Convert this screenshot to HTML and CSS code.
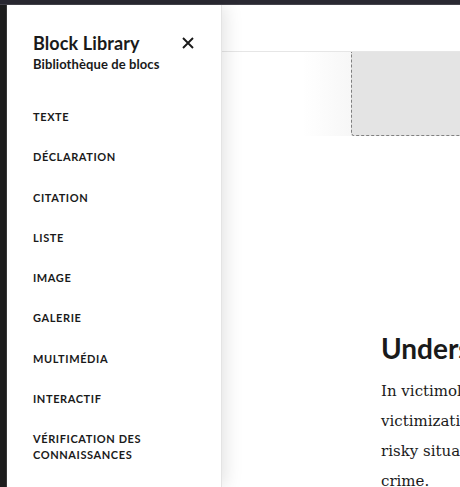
FILE: index.html
```html
<!DOCTYPE html>
<html lang="fr">
<head>
<meta charset="utf-8">
<title>Block Library</title>
<link rel="stylesheet" href="styles.css">
</head>
<body>
<div class="topbar"></div>
<div class="app">
  <div class="rail"></div>
  <aside class="panel">
    <div class="panel-head">
      <div class="titles">
        <h1 class="title">Block Library</h1>
        <p class="subtitle">Bibliothèque de blocs</p>
      </div>
      <button class="close" aria-label="Fermer">
        <svg width="12" height="12" viewBox="0 0 12 12"><path d="M1 1L11 11M11 1L1 11" stroke="#1a1a1a" stroke-width="1.9" fill="none"/></svg>
      </button>
    </div>
    <ul class="blocks">
      <li>TEXTE</li>
      <li>DÉCLARATION</li>
      <li>CITATION</li>
      <li>LISTE</li>
      <li>IMAGE</li>
      <li>GALERIE</li>
      <li>MULTIMÉDIA</li>
      <li>INTERACTIF</li>
      <li>VÉRIFICATION DES CONNAISSANCES</li>
    </ul>
  </aside>
  <main class="main">
    <div class="toolbar"></div>
    <div class="canvas">
      <div class="placeholder"></div>
      <article class="article">
        <h2 class="heading">Understanding victimology</h2>
        <p class="body"><span class="line">In victimology, lifestyle theory explains</span><span class="line">victimization as a result of exposure to</span><span class="line">risky situations that create chances for</span><span class="line">crime.</span></p>
      </article>
    </div>
  </main>
</div>
</body>
</html>
```
FILE: styles.css
```css
* { box-sizing: border-box; }
html, body { margin: 0; padding: 0; }
body {
  width: 460px;
  height: 487px;
  overflow: hidden;
  background: #ffffff;
  font-family: "Lato", "Noto Sans", sans-serif;
  color: #1a1a1a;
}
.topbar {
  height: 5px;
  background: #2a2932;
  border-bottom: 1px solid #45444c;
}
.app {
  display: flex;
  height: 482px;
}
.rail {
  width: 7px;
  flex: none;
  background: #1e1e1e;
  border-right: 1px solid #3a3a3a;
}
.panel {
  width: 215px;
  flex: none;
  background: #fff;
  padding: 27px 27px 0 26px;
  position: relative;
  z-index: 2;
  box-shadow: 2px 0 18px rgba(0,0,0,0.13);
  border-right: 1px solid #e4e4e4;
}
.panel-head {
  display: flex;
  justify-content: space-between;
  align-items: flex-start;
}
.title {
  margin: 0;
  font-size: 18px;
  line-height: 22px;
  font-weight: 700;
  letter-spacing: 0.1px;
}
.subtitle {
  margin: 1px 0 0;
  font-size: 13px;
  line-height: 18px;
  font-weight: 700;
  letter-spacing: 0.1px;
}
.close {
  border: 0;
  background: none;
  padding: 0;
  margin-top: 5px;
  width: 12px;
  height: 12px;
  display: flex;
}
.blocks {
  list-style: none;
  margin: 36px 0 0;
  padding: 0;
}
.blocks li {
  font-size: 11px;
  line-height: 16px;
  font-weight: 700;
  letter-spacing: 0.6px;
  margin-bottom: 24.25px;
}
.main {
  flex: 1;
  min-width: 0;
  display: flex;
  flex-direction: column;
}
.toolbar {
  height: 47px;
  flex: none;
  border-bottom: 1px solid #e6e6e6;
}
.canvas {
  flex: 1;
  overflow: hidden;
  padding-left: 129px;
  background: linear-gradient(90deg, #ffffff 0px, #ffffff 80px, #f7f7f7 129px, #ffffff 130px);
  background-size: 100% 84px;
  background-repeat: no-repeat;
}
.placeholder {
  height: 84px;
  width: 200px;
  background: #e4e4e4;
  border-left: 1.5px dashed #808080;
  border-bottom: 1.5px dashed #808080;
  border-bottom-left-radius: 3px;
}
.article {
  margin-top: 195px;
  padding-left: 30px;
  width: 420px;
}
.heading {
  margin: 0;
  font-family: "Lato", sans-serif;
  font-size: 28px;
  line-height: 35px;
  font-weight: 700;
  white-space: nowrap;
}
.body {
  margin: 10px 0 0;
  font-family: "DejaVu Serif", serif;
  font-size: 15px;
  line-height: 30px;
  color: #1a1a1a;
}
.line {
  display: block;
  white-space: nowrap;
}
```
